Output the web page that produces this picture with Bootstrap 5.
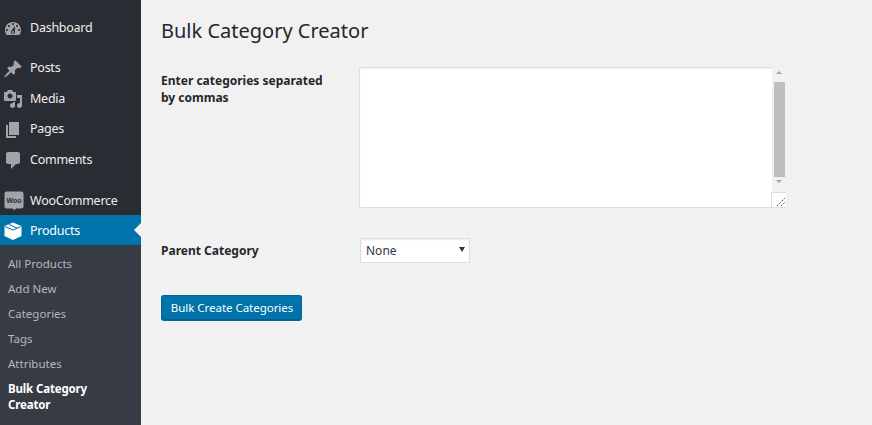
<!DOCTYPE html>
<html lang="en">
<head>
<meta charset="utf-8">
<title>Bulk Category Creator</title>
<link href="https://cdn.jsdelivr.net/npm/bootstrap@5.3.0/dist/css/bootstrap.min.css" rel="stylesheet">
<style>
html,body{height:425px;overflow:hidden}
body{background:#f1f1f1;color:#23282d;font-family:"Noto Sans","Open Sans",sans-serif;font-size:13px}
.wp-shell{height:425px}
.wp-side{width:141px;flex:none;background:#292c33;color:#eee;font-size:12.5px;letter-spacing:-.25px}
.wp-item{height:30.5px;padding:1px 0 0 3px;gap:7px;color:#eee;text-decoration:none}
.wp-item svg{width:20px;height:20px;flex:none;fill:#a0a5aa}
.wp-first{margin-top:13px;margin-bottom:9.5px}
.wp-woo{margin-top:10px;height:30px;padding-top:2px;padding-left:3.5px;gap:6.5px}
.wp-active{background:#0073aa;color:#fff;height:30px;position:relative;padding-top:2px}
.wp-active svg{fill:#fff}
.wp-active::after{content:"";position:absolute;right:0;top:8px;border:7px solid transparent;border-right-color:#f1f1f1;border-left-width:0}
.wp-sub{background:#373b44;padding:6px 24px 8px 8px;flex:1;letter-spacing:0}
.wp-sub a{display:block;color:#b4b9be;text-decoration:none;font-size:11.5px;line-height:16px;padding:4.5px 0}
.wp-sub a.wp-current{color:#fff;font-weight:700;letter-spacing:-.15px}
.wp-main{padding:16px 0 0 20px}
.wp-title{font-size:20px;line-height:30px;font-weight:400;margin:0 0 21px}
.wp-label{width:198px;font-weight:700;line-height:17px;font-size:12px;padding-right:30px}
.wp-label-top{padding-top:5px}
.wp-label-mid{width:199px}
.wp-areawrap{width:427px;height:141px;background:#fff;border:1px solid #ddd;border-right:0;box-shadow:inset 0 1px 2px rgba(0,0,0,.07);position:relative}
.wp-area{flex:1;border:0;outline:0;resize:none;background:transparent;min-width:0}
.wp-scroll{width:14px;background:#f1f1f1;margin-top:-1px;padding:0 1px 0 2px;gap:0}
.wp-thumb{height:95px;background:#bebebe;margin:0}
.wp-up,.wp-down{height:15px;position:relative}
.wp-up::before,.wp-down::before{content:"";position:absolute;left:2px;border:3.5px solid transparent}
.wp-up::before{top:4px;border-bottom-color:#a3a3a3;border-top-width:0}
.wp-down::before{top:3px;border-top-color:#a3a3a3;border-bottom-width:0}
.wp-grip{position:absolute;right:0;bottom:0;width:15px;height:15px;background:#fff;border:1px solid #ddd;border-right:0;border-bottom:0}
.wp-grip svg{display:block;width:14px;height:14px}
.wp-select{width:110px;height:25px;background:#fff;border:1px solid #ddd;padding:0 4px 0 5px;line-height:23px;color:#32373c;box-shadow:inset 0 1px 2px rgba(0,0,0,.07);font-size:12px}
.wp-caret{border:3px solid transparent;border-top:5px solid #333;border-bottom:0;margin-bottom:2px}
.wp-row2{margin-top:30px;height:25px}
.wp-btn{margin-top:32px;width:141px;background:#0073aa;border:1px solid #006799;border-bottom-color:#005f8c;color:#fff;font-size:11.5px;line-height:23px;padding:0 0 0 1px;letter-spacing:-.03px;border-radius:3px;box-shadow:0 1px 0 #006799}
.wp-btn:hover{background:#0073aa;color:#fff}
.wp-woolabel{font:700 7px "Liberation Sans",sans-serif;fill:#292c33;letter-spacing:0}
</style>
</head>
<body>
<div class="wp-shell d-flex">
  <nav class="wp-side d-flex flex-column">
    <a class="wp-item wp-first d-flex align-items-center" href="#"><svg viewBox="0 0 20 20"><path fill-rule="evenodd" d="M3.760 16h12.480c1.100-1.370 1.760-3.110 1.760-5 0-4.420-3.580-8-8-8s-8 3.580-8 8c0 1.890.66 3.630 1.760 5zM10 4c.55 0 1 .45 1 1s-.45 1-1 1-1-.45-1-1 .45-1 1-1zM6 6c.55 0 1 .45 1 1s-.45 1-1 1-1-.45-1-1 .45-1 1-1zm8 0c.55 0 1 .45 1 1s-.45 1-1 1-1-.45-1-1 .45-1 1-1zm-5.370 5.550L12 7v6c0 1.100-.9 2-2 2s-2-.9-2-2c0-.57.24-1.080.63-1.450zM4 10c.55 0 1 .45 1 1s-.45 1-1 1-1-.45-1-1 .45-1 1-1zm12 0c.55 0 1 .45 1 1s-.45 1-1 1-1-.45-1-1 .45-1 1-1zm-5 3c0-.55-.45-1-1-1s-1 .45-1 1 .45 1 1 1 1-.45 1-1z"/></svg>Dashboard</a>
    <a class="wp-item d-flex align-items-center" href="#"><svg viewBox="0 0 20 20"><path d="M10.440 3.020l1.820-1.820 6.360 6.350-1.830 1.820c-1.050-.68-2.480-.57-3.410.36l-.75.75c-.92.93-1.040 2.350-.35 3.400l-1.830 1.820-2.410-2.410-2.800 2.790c-.42.42-3.380 2.710-3.800 2.290s1.860-3.390 2.280-3.810l2.790-2.790L4.100 9.360l1.830-1.820c1.050.69 2.480.57 3.400-.36l.75-.75c.93-.92 1.050-2.350.36-3.410z"/></svg>Posts</a>
    <a class="wp-item d-flex align-items-center" href="#"><svg viewBox="0 0 20 20"><path fill-rule="evenodd" d="M13 11V4c0-.55-.45-1-1-1h-1.670L9 1H5L3.670 3H2c-.55 0-1 .45-1 1v7c0 .55.45 1 1 1h10c.55 0 1-.45 1-1zM7 4.500c1.380 0 2.500 1.120 2.500 2.500S8.380 9.500 7 9.500 4.500 8.380 4.500 7 5.620 4.500 7 4.500zM14 6h5v10.500c0 1.380-1.120 2.500-2.500 2.500S14 17.880 14 16.500s1.120-2.500 2.500-2.500c.17 0 .34.020.5.050V9h-3V6zm-4 8.050V13h2v3.500c0 1.380-1.120 2.500-2.500 2.500S7 17.880 7 16.500 8.120 14 9.500 14c.17 0 .34.020.5.050z"/></svg>Media</a>
    <a class="wp-item d-flex align-items-center" href="#"><svg viewBox="0 0 20 20"><path d="M6 15V2h10v13H6zm-1 1h8v2H3V5h2v11z"/></svg>Pages</a>
    <a class="wp-item d-flex align-items-center" href="#"><svg viewBox="0 0 20 20"><path d="M5 2h10c1.100 0 2 .9 2 2v8c0 1.100-.9 2-2 2h-2l-5 5v-5H5c-1.100 0-2-.9-2-2V4c0-1.100.9-2 2-2z"/></svg>Comments</a>
    <a class="wp-item wp-woo d-flex align-items-center" href="#"><svg viewBox="0 0 20 20"><path d="M2.500 0.500h15a2 2 0 0 1 2 2v13a2 2 0 0 1-2 2h-5.500l-2 2-1-2h-6.500a2 2 0 0 1-2-2v-13a2 2 0 0 1 2-2z"/><text class="wp-woolabel" x="10" y="11.500" text-anchor="middle">Woo</text></svg>WooCommerce</a>
    <a class="wp-item wp-active d-flex align-items-center" href="#"><svg viewBox="0 0 20 20"><path d="M10 1.500l8.500 3.500v10l-8.500 4-8.500-4V5z"/><path d="M2 5.500l8 3.500 8-3.500M6 3.500l8 3.500" fill="none" stroke="#0073aa" stroke-width="1"/></svg>Products</a>
    <div class="wp-sub">
      <a href="#">All Products</a>
      <a href="#">Add New</a>
      <a href="#">Categories</a>
      <a href="#">Tags</a>
      <a href="#">Attributes</a>
      <a class="wp-current" href="#">Bulk Category Creator</a>
    </div>
  </nav>
  <main class="wp-main flex-grow-1">
    <h1 class="wp-title">Bulk Category Creator</h1>
    <div class="d-flex">
      <label class="wp-label wp-label-top" for="cats">Enter categories separated by commas</label>
      <div class="wp-areawrap d-flex">
        <textarea class="wp-area" id="cats"></textarea>
        <div class="wp-scroll d-flex flex-column">
          <div class="wp-up"></div>
          <div class="wp-thumb"></div>
          <div class="wp-down"></div>
        </div>
        <div class="wp-grip"><svg viewBox="0 0 14 14"><path d="M5 13l8-8M9 13l4-4" stroke="#444" stroke-width="1" stroke-dasharray="1.400 1" fill="none"/></svg></div>
      </div>
    </div>
    <div class="wp-row2 d-flex align-items-center">
      <label class="wp-label wp-label-mid" for="parent">Parent Category</label>
      <div class="wp-select d-flex align-items-center justify-content-between" id="parent"><span>None</span><span class="wp-caret"></span></div>
    </div>
    <button class="btn wp-btn d-block" type="button">Bulk Create Categories</button>
  </main>
</div>
<script src="https://cdn.jsdelivr.net/npm/bootstrap@5.3.0/dist/js/bootstrap.bundle.min.js"></script>
</body>
</html>
